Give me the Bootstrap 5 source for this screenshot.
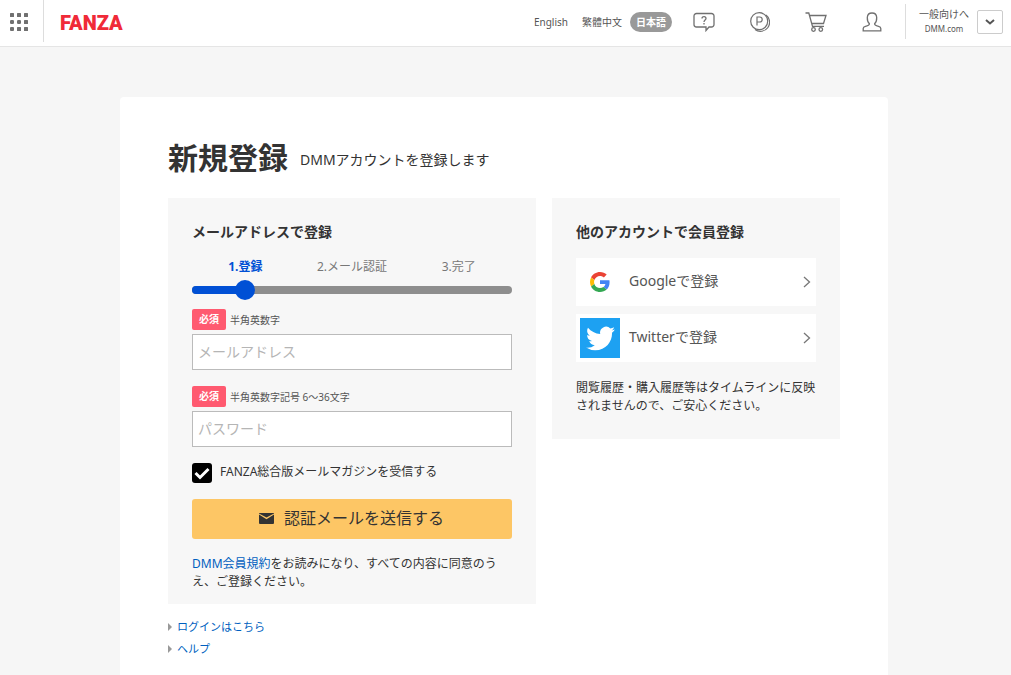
<!DOCTYPE html>
<html lang="ja">
<head>
<meta charset="utf-8">
<meta name="viewport" content="width=device-width, initial-scale=1">
<title>新規登録 - FANZA</title>
<link href="https://cdn.jsdelivr.net/npm/bootstrap@5.3.0/dist/css/bootstrap.min.css" rel="stylesheet">
<style>
body{font-family:"Noto Sans","Noto Sans CJK JP",sans-serif;font-size:12px;line-height:18px;color:#333;background:#f6f6f6}
a{color:#005fc0;text-decoration:none}
button{font-family:inherit}
.site-header{height:47px;background:#fff;border-bottom:1px solid #e5e5e5;font-size:10px;line-height:14px}
.site-header a{color:#555}
.site-nav{padding-bottom:3px}
.apps-btn{width:43px;height:44px;padding:0 0 0 10px;text-align:left}
.rule{width:1px;background:#ddd}
.nav-rule{margin:4px 1px 4px 5px}
.brand{font:900 20px/22px Roboto,"Liberation Sans",sans-serif}
.site-header .brand{color:#f02a38}
.lang-zh{margin:0 8px 0 14px}
.pill{height:20px;padding:0 6px;border-radius:10px;background:#999;color:#fff;line-height:20px}
.tool{width:56px}
.site-switch small{font-size:8px}
.more-btn{width:26px;height:24px;border:1px solid #ccc;border-radius:2px;background:#fff}
.sheet-wrap{padding:50px 3px 0 0}
.sheet{width:100%;max-width:768px;background:#fff;border-radius:4px 4px 0 0;padding:41px 48px 14px}
.sheet-head{margin-bottom:20px}
h1{font-size:30px;line-height:40px;margin:0}
.lede{font-size:14px;line-height:20px}
.panel{background:#f7f7f7;padding:24px}
.panel-main{flex:1 1 0;padding-bottom:13px}
.panel-side{flex:0 0 288px}
h2{font-size:14px;line-height:20px;margin:0;font-weight:700}
.steps{color:#777;margin:16px 0 10px}
.steps .now{color:#0050d5}
.track{height:8px;border-radius:4px;background:#8e8e8e;margin-bottom:15px}
.track-done{height:8px;border-radius:4px 0 0 4px;background:#0050d5}
.track-dot{width:20px;height:20px;border-radius:50%;background:#0050d5;right:-10px;top:-6px}
.req{width:34px;height:21px;line-height:21px;border-radius:2px;background:#ff5a70;color:#fff}
.field-label{font-size:10px;color:#555;margin-bottom:4px}
.field .form-control{height:36px;border:1px solid #bbb;border-radius:0;padding:0 5px 2px;font-size:14px}
.field .form-control::placeholder{color:#b5b5b5}
.optin .form-check-input{width:20px;height:20px;margin:0;border:0;border-radius:3px;background-color:#000}
.optin .form-check-input:checked{background-color:#000;background-size:20px;background-image:url("data:image/svg+xml,%3csvg xmlns='http://www.w3.org/2000/svg' viewBox='0 0 20 20'%3e%3cpath fill='none' stroke='%23fff' stroke-width='3' d='M3.5 10l4.5 4.5L16.5 6'/%3e%3c/svg%3e")}
.btn-send,.btn-send:hover{height:40px;border:0;border-radius:3px;background:#fdc665;color:#333;font-size:16px;line-height:24px;padding:0 2px 2px 0}
.other{height:48px;background:#fff;color:#555;font-size:14px;line-height:20px;padding:0 5px 0 4px}
.other-icon{width:40px;height:40px;margin-right:9px}
.other-name{padding-bottom:2px}
.tw{background:#1da1f2}
.side-note{margin:17px 0 0}
.more-links{font-size:11px;line-height:22px;margin-top:12px}
.tri{width:0;height:0;margin-right:5px;border:4px solid transparent;border-left-color:#999;border-right:0}
</style>
</head>
<body class="d-flex flex-column min-vh-100">
<header class="site-header d-flex flex-shrink-0">
  <button class="btn apps-btn border-0" type="button" aria-label="メニュー">
    <svg class="d-block" width="18" height="18" viewBox="0 0 18 18" fill="#707070"><rect width="4" height="4" rx=".5"/><rect x="7" width="4" height="4" rx=".5"/><rect x="14" width="4" height="4" rx=".5"/><rect y="7" width="4" height="4" rx="1.2"/><rect x="7" y="7" width="4" height="4" rx="1.2"/><rect x="14" y="7" width="4" height="4" rx=".5"/><rect y="14" width="4" height="4" rx="1"/><rect x="7" y="14" width="4" height="4" rx=".5"/><rect x="14" y="14" width="4" height="4" rx=".5"/></svg>
  </button>
  <div class="rule mb-1"></div>
  <a class="brand align-self-center ms-3" href="#">FANZA</a>
  <nav class="site-nav d-flex align-items-center ms-auto">
    <a href="#">English</a>
    <a class="lang-zh" href="#">繁體中文</a>
    <span class="pill fw-bold me-1">日本語</span>
    <a class="tool d-flex justify-content-center" href="#" aria-label="お問い合わせ">
      <svg width="22" height="20" viewBox="0 0 22 20" fill="none" stroke="#707070" stroke-width="1.3"><path d="M3.500 1.500h15a2.500 2.500 0 0 1 2.500 2.500v8.500a2.500 2.500 0 0 1-2.500 2.500h-2.500l-3 3.500V15H3.500A2.500 2.500 0 0 1 1 12.500V4a2.500 2.500 0 0 1 2.500-2.500z"/><path d="M9 6.500c0-2.500 4-2.500 4 0 0 1.700-2 1.500-2 3.500M11 11v1.500"/></svg></a>
    <a class="tool d-flex justify-content-center" href="#" aria-label="ポイント">
      <svg width="20" height="20" viewBox="0 0 20 20" fill="none" stroke="#707070" stroke-width="1.200"><circle cx="9.200" cy="9.200" r="8.500"/><path d="M16 3a8.300 8.300 0 1 1-11 14.500M7 13.500V5h2.700a2.500 2.500 0 0 1 0 5H7"/></svg></a>
    <a class="tool d-flex justify-content-center" href="#" aria-label="カート">
      <svg width="22" height="20" viewBox="0 0 22 20" fill="none" stroke="#707070" stroke-width="1.300"><path d="M.5 1h3.300l3.700 13.300h11.500M4.500 3.500h16.500L18.500 11.500H6.800"/><circle cx="8.500" cy="17.500" r="1.800"/><circle cx="15.800" cy="17.500" r="1.800"/></svg></a>
    <a class="tool d-flex justify-content-center" href="#" aria-label="アカウント">
      <svg width="20" height="20" viewBox="0 0 20 20" fill="none" stroke="#707070" stroke-width="1.300"><path d="M1.200 18.800v-2.300c0-1.300.8-1.700 2.300-2.100 2.200-.5 4.200-1.200 3.900-2.700C5.700 10.200 5.200 8.300 5.300 5.500 5.400 2.500 7.200 1 10 1s4.600 1.500 4.700 4.500c.1 2.800-.4 4.700-2.100 6.200-.3 1.500 1.700 2.200 3.900 2.700 1.500.4 2.300.8 2.300 2.100v2.300z"/></svg></a>
    <div class="rule nav-rule align-self-stretch"></div>
    <a class="site-switch text-center ms-2 ps-1 me-2" href="#">一般向けへ<br><small>DMM.com</small></a>
    <button class="more-btn p-0 me-2 d-flex align-items-center justify-content-center" type="button" aria-label="サービスを開く"><svg width="10" height="6" viewBox="0 0 10 6"><path d="M1 1l4 3.500L9 1" fill="none" stroke="#555" stroke-width="2"/></svg></button>
  </nav>
</header>

<main class="sheet-wrap flex-grow-1 d-flex justify-content-center">
  <div class="sheet">
    <div class="sheet-head d-flex align-items-center">
      <h1 class="fw-bold">新規登録</h1><span class="lede ms-2 ps-1 pt-1">DMMアカウントを登録します</span>
    </div>
    <div class="d-flex gap-3 align-items-start">
      <form class="panel panel-main">
        <h2>メールアドレスで登録</h2>
        <div class="steps d-flex text-center">
          <div class="col now fw-bold">1.登録</div><div class="col">2.メール認証</div><div class="col">3.完了</div>
        </div>
        <div class="track">
          <div class="track-done position-relative" style="width:16.6%"><span class="track-dot position-absolute"></span></div>
        </div>
        <div class="field mb-3">
          <label class="field-label d-flex align-items-center gap-1" for="mail"><span class="req fw-bold text-center">必須</span>半角英数字</label>
          <input class="form-control" id="mail" type="email" placeholder="メールアドレス">
        </div>
        <div class="field mb-3">
          <label class="field-label d-flex align-items-center gap-1" for="pass"><span class="req fw-bold text-center">必須</span>半角英数字記号 6～36文字</label>
          <input class="form-control" id="pass" type="password" placeholder="パスワード">
        </div>
        <div class="optin d-flex gap-2 mb-3">
          <input class="form-check-input flex-shrink-0" id="news" type="checkbox" checked><label for="news">FANZA総合版メールマガジンを受信する</label>
        </div>
        <button class="btn btn-send w-100 d-flex align-items-center justify-content-center gap-2" type="submit">
          <svg width="18" height="12" viewBox="0 0 18 12" fill="#333"><path d="M1 2.500l7.500 4.700L16 2.500V11a1 1 0 0 1-1 1H2a1 1 0 0 1-1-1zM1 1h15v.500L8.500 5.500 1 1.500z"/></svg>認証メールを送信する
        </button>
        <p class="mt-3 mb-0"><a href="#">DMM会員規約</a>をお読みになり、すべての内容に同意のうえ、ご登録ください。</p>
      </form>
      <section class="panel panel-side">
        <h2>他のアカウントで会員登録</h2>
        <a class="other d-flex align-items-center mt-3 mb-2" href="#">
          <span class="other-icon d-flex align-items-center justify-content-center"><svg width="20" height="20" viewBox="0 0 48 48"><path fill="#ea4335" d="M24 9.500c3.540 0 6.710 1.220 9.210 3.600l6.850-6.850C35.900 2.380 30.470 0 24 0 14.620 0 6.510 5.380 2.560 13.220l7.980 6.190C12.430 13.720 17.740 9.500 24 9.500z"/><path fill="#4285f4" d="M46.980 24.550c0-1.570-.15-3.090-.38-4.550H24v9.020h12.940c-.58 2.960-2.260 5.480-4.780 7.180l7.730 6c4.510-4.180 7.090-10.360 7.090-17.650z"/><path fill="#fbbc05" d="M10.530 28.590c-.48-1.450-.76-2.990-.76-4.590s.27-3.140.76-4.590l-7.980-6.190C.92 16.460 0 20.120 0 24s.92 7.540 2.560 10.780z"/><path fill="#34a853" d="M24 48c6.480 0 11.930-2.130 15.890-5.810l-7.730-6c-2.150 1.450-4.920 2.300-8.160 2.300-6.260 0-11.570-4.220-13.470-9.910l-7.980 6.190C6.510 42.620 14.620 48 24 48z"/></svg></span>
          <span class="other-name me-auto">Googleで登録</span>
          <svg width="8" height="12" viewBox="0 0 8 12"><path d="M1 1l5.500 5L1 11" fill="none" stroke="#777" stroke-width="1.300"/></svg>
        </a>
        <a class="other d-flex align-items-center" href="#">
          <span class="other-icon tw d-flex align-items-center justify-content-center"><svg width="29" height="29" viewBox="0 0 24 24" fill="#fff"><path d="M23.950 4.570a10 10 0 0 1-2.820.770 4.960 4.960 0 0 0 2.160-2.720c-.950.550-2 .950-3.130 1.180a4.920 4.920 0 0 0-8.380 4.480C7.690 8.090 4.070 6.130 1.640 3.160a4.920 4.920 0 0 0 1.520 6.570 4.900 4.900 0 0 1-2.230-.610v.060a4.920 4.920 0 0 0 3.950 4.830 5 5 0 0 1-2.210.080 4.940 4.940 0 0 0 4.600 3.420A9.870 9.870 0 0 1 0 19.540a14 14 0 0 0 7.550 2.210c9.050 0 14-7.500 14-13.980 0-.210 0-.420-.020-.630a9.940 9.940 0 0 0 2.420-2.570z"/></svg></span>
          <span class="other-name me-auto">Twitterで登録</span>
          <svg width="8" height="12" viewBox="0 0 8 12"><path d="M1 1l5.500 5L1 11" fill="none" stroke="#777" stroke-width="1.300"/></svg>
        </a>
        <p class="side-note">閲覧履歴・購入履歴等はタイムラインに反映されませんので、ご安心ください。</p>
      </section>
    </div>
    <ul class="more-links list-unstyled mb-0">
      <li class="d-flex align-items-center"><span class="tri"></span><a href="#">ログインはこちら</a></li>
      <li class="d-flex align-items-center"><span class="tri"></span><a href="#">ヘルプ</a></li>
    </ul>
  </div>
</main>
<script src="https://cdn.jsdelivr.net/npm/bootstrap@5.3.0/dist/js/bootstrap.bundle.min.js"></script>
</body>
</html>
